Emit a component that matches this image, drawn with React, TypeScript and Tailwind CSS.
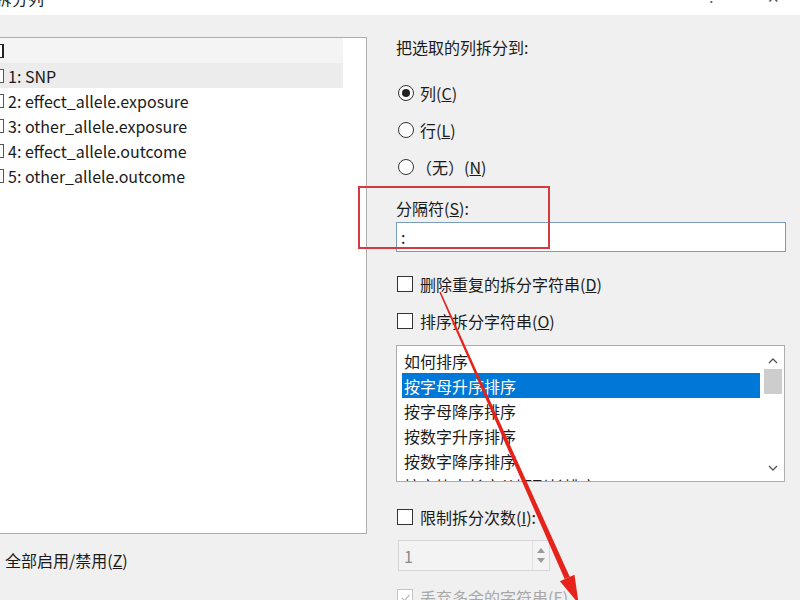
import React from "react";

const FONT = '"Noto Sans CJK SC", "Noto Sans", sans-serif';

function CheckBox({ disabled = false, checked = false }: { disabled?: boolean; checked?: boolean }) {
  return (
    <span
      className={`flex h-[16px] w-[16px] shrink-0 items-center justify-center border bg-white ${
        disabled ? "border-[#c4c4c4]" : "border-[#333333]"
      }`}
    >
      {checked && (
        <svg viewBox="0 0 12 12" className="h-[11px] w-[11px]">
          <path d="M2 6.5 L5 9.5 L10.5 3" fill="none" stroke={disabled ? "#c0c0c0" : "#222"} strokeWidth="1.4" />
        </svg>
      )}
    </span>
  );
}

function Radio({ selected = false }: { selected?: boolean }) {
  return (
    <span className="flex h-[16px] w-[16px] shrink-0 items-center justify-center rounded-full border border-[#333333] bg-white">
      {selected && <span className="h-[8px] w-[8px] rounded-full bg-[#222222]" />}
    </span>
  );
}

const columns = [
  "",
  "1: SNP",
  "2: effect_allele.exposure",
  "3: other_allele.exposure",
  "4: effect_allele.outcome",
  "5: other_allele.outcome",
];

const sortItems = ["如何排序", "按字母升序排序", "按字母降序排序", "按数字升序排序", "按数字降序排序", "按字符串长度从短到长排序"];

function RedArrow() {
  // tapered red annotation line with an arrow head at the bottom
  return (
    <svg className="pointer-events-none absolute left-0 top-0" width="800" height="600" viewBox="0 0 800 600">
      <polygon points="439.3,292.3 440.7,291.7 569.8,576.9 564.6,579.1" fill="#e5231b" />
      <polygon points="559.9,581.3 574.5,574.7 578.6,603.6" fill="#e5231b" />
    </svg>
  );
}

export default function App() {
  return (
    <div
      className="relative h-[600px] w-[800px] overflow-hidden bg-[#f0f0f0] text-[16px] text-[#1b1b1b]"
      style={{ fontFamily: FONT }}
    >
      {/* Title bar (scrolled mostly out of view) */}
      <div className="flex h-[15px] items-start overflow-hidden bg-white">
        <span className="-ml-[4px] -mt-[12px] leading-[20px] text-[#222]">拆分列</span>
        <span className="-mt-[13px] ml-auto text-[15px] leading-[20px] text-[#555]">?</span>
        <span className="-mt-[13px] ml-[52px] mr-[20px] text-[15px] leading-[20px] text-[#555]">✕</span>
      </div>

      <div className="flex">
        {/* Left column */}
        <div className="flex w-[367px] shrink-0 flex-col pt-[22px]">
          <div className="-ml-[10px] h-[497px] w-[377px] border border-[#adadad] bg-white">
            {columns.map((c, i) => (
              <div
                key={i}
                className={`flex h-[25px] w-[352px] items-center gap-[4px] ${
                  i === 0 ? "bg-[#f4f4f4]" : i === 1 ? "bg-[#ececec]" : ""
                }`}
              >
                <span className={`h-[14px] w-[13px] shrink-0 border bg-white ${i === 0 ? "border-[#222] border-r-2" : "border-[#555]"}`} />
                <span className="leading-[20px]">{c}</span>
              </div>
            ))}
          </div>
          <div className="mt-[16px] pl-[5px] leading-[20px]">
            全部启用/禁用(<u>Z</u>)
          </div>
        </div>

        {/* Right column */}
        <div className="ml-[29px] flex w-[390px] flex-col pt-[22px]">
          <div className="h-[20px] leading-[20px]">把选取的列拆分到:</div>

          <label className="mt-[26px] flex h-[20px] items-center gap-[6px] pl-[2px]">
            <Radio selected />
            <span className="leading-[20px]">
              列(<u>C</u>)
            </span>
          </label>
          <label className="mt-[17px] flex h-[20px] items-center gap-[6px] pl-[2px]">
            <Radio />
            <span className="leading-[20px]">
              行(<u>L</u>)
            </span>
          </label>
          <label className="mt-[17px] flex h-[20px] items-center gap-[2px] pl-[2px]">
            <Radio />
            <span className="leading-[20px]">
              （无）(<u>N</u>)
            </span>
          </label>

          <div className="mt-[21px] h-[20px] leading-[20px]">
            分隔符(<u>S</u>):
          </div>
          <div className="mt-[4px] flex h-[30px] w-[390px] items-center border border-[#7a9cc0] bg-white pl-[4px] leading-[20px]">
            :
          </div>

          <label className="mt-[22px] flex h-[20px] items-center gap-[7px] pl-[1px]">
            <CheckBox />
            <span className="leading-[20px]">
              删除重复的拆分字符串(<u>D</u>)
            </span>
          </label>
          <label className="mt-[17px] flex h-[20px] items-center gap-[7px] pl-[1px]">
            <CheckBox />
            <span className="leading-[20px]">
              排序拆分字符串(<u>O</u>)
            </span>
          </label>

          {/* Sort listbox */}
          <div className="mt-[14px] flex h-[137px] w-[389px] overflow-hidden border border-[#adadad] bg-white">
            <div className="ml-[5px] w-[358px] pt-[2px]">
              {sortItems.map((s, i) => (
                <div
                  key={s}
                  className={`flex h-[25px] items-center whitespace-nowrap pl-[2px] leading-[20px] ${
                    i === 1 ? "bg-[#0078d7] text-white" : ""
                  }`}
                >
                  {s}
                </div>
              ))}
            </div>
            <div className="ml-auto flex w-[22px] flex-col items-center bg-white">
              <svg viewBox="0 0 10 6" className="mt-[12px] h-[6px] w-[10px]">
                <path d="M1 5 L5 1 L9 5" fill="none" stroke="#555" strokeWidth="1.3" />
              </svg>
              <div className="mt-[5px] h-[25px] w-[18px] bg-[#cdcdcd]" />
              <svg viewBox="0 0 10 6" className="mt-auto mb-[10px] h-[6px] w-[10px]">
                <path d="M1 1 L5 5 L9 1" fill="none" stroke="#555" strokeWidth="1.3" />
              </svg>
            </div>
          </div>

          <label className="mt-[25px] flex h-[20px] items-center gap-[7px] pl-[1px]">
            <CheckBox />
            <span className="leading-[20px]">
              限制拆分次数(<u>I</u>):
            </span>
          </label>

          {/* Disabled spinner */}
          <div className="ml-[2px] mt-[13px] flex h-[31px] w-[152px] border border-[#d6d6d6] bg-[#f3f3f3]">
            <span className="flex items-center pl-[5px] leading-[20px] text-[#8a8a8a]">1</span>
            <div className="ml-auto flex w-[17px] flex-col items-center justify-center gap-[5px] border-l border-[#e0e0e0]">
              <svg viewBox="0 0 8 5" className="h-[5px] w-[8px]">
                <path d="M0 5 L4 0 L8 5 Z" fill="#9a9a9a" />
              </svg>
              <svg viewBox="0 0 8 5" className="h-[5px] w-[8px]">
                <path d="M0 0 L4 5 L8 0 Z" fill="#9a9a9a" />
              </svg>
            </div>
          </div>

          <label className="mt-[16px] flex h-[20px] items-center gap-[7px] pl-[1px] text-[#a8a8a8]">
            <CheckBox disabled checked />
            <span className="leading-[20px]">
              丢弃多余的字符串(<u>E</u>)
            </span>
          </label>
        </div>
      </div>

      {/* Annotation: red box around separator */}
      <div className="pointer-events-none absolute left-[358px] top-[186px] h-[63px] w-[192px] border-2 border-[#d63a3f]" />
      <RedArrow />
    </div>
  );
}
